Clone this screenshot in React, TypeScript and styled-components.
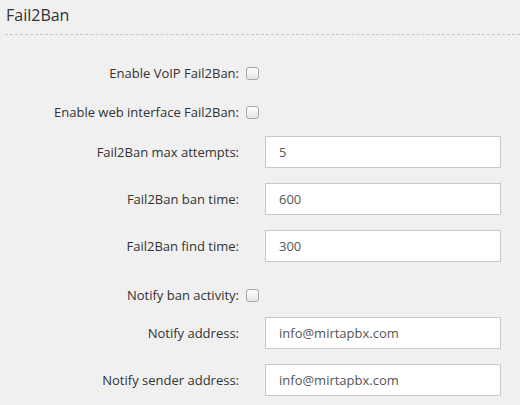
import React from "react";
import styled, { createGlobalStyle } from "styled-components";

const Global = createGlobalStyle`
  html, body { margin: 0; padding: 0; background: #f0f0f0; }
  body { font-family: "Open Sans", "Liberation Sans", sans-serif; color: #333; }
`;

const Page = styled.div`
  width: 520px;
  height: 405px;
  overflow: hidden;
  background: #f0f0f0;
  padding-left: 5px;
  box-sizing: border-box;
`;

const Header = styled.div`
  border-bottom: 1px dashed #c8c8c8;
  height: 35px;
  box-sizing: border-box;
  padding: 3px 0 0 1px;
`;

const Title = styled.h2`
  margin: 0;
  font-size: 16px;
  font-weight: 400;
  line-height: 24px;
  color: #333;
`;

const Row = styled.div<{ $mt: number; $h: number }>`
  display: grid;
  grid-template-columns: 234px auto;
  align-items: center;
  margin-top: ${(p) => p.$mt}px;
  height: ${(p) => p.$h}px;
`;

const Label = styled.label`
  text-align: right;
  font-size: 13px;
  line-height: 18px;
  color: #333;
  white-space: nowrap;
`;

const Check = styled.input.attrs({ type: "checkbox" })`
  appearance: none;
  margin: 0 0 0 7px;
  width: 13px;
  height: 13px;
  border: 1px solid #a6a6a6;
  border-radius: 3px;
  background: linear-gradient(#fdfdfd, #e6e6e6);
  box-sizing: border-box;
`;

const Field = styled.input`
  margin-left: 26px;
  width: 236px;
  height: 32px;
  box-sizing: border-box;
  border: 1px solid #c8c8c8;
  background: #fff;
  padding: 0 0 0 13px;
  font-family: "Open Sans", "Liberation Sans", sans-serif;
  font-size: 13px;
  color: #555;
  outline: none;
`;

type Item =
  | { kind: "check"; label: string; mt: number }
  | { kind: "input"; label: string; value: string; mt: number };

const items: Item[] = [
  { kind: "check", label: "Enable VoIP Fail2Ban:", mt: 28 },
  { kind: "check", label: "Enable web interface Fail2Ban:", mt: 19 },
  { kind: "input", label: "Fail2Ban max attempts:", value: "5", mt: 14 },
  { kind: "input", label: "Fail2Ban ban time:", value: "600", mt: 15 },
  { kind: "input", label: "Fail2Ban find time:", value: "300", mt: 15 },
  { kind: "check", label: "Notify ban activity:", mt: 23 },
  { kind: "input", label: "Notify address:", value: "info@mirtapbx.com", mt: 12 },
  { kind: "input", label: "Notify sender address:", value: "info@mirtapbx.com", mt: 15 },
];

export default function App() {
  return (
    <>
      <Global />
      <Page>
        <Header>
          <Title>Fail2Ban</Title>
        </Header>
        {items.map((it, i) =>
          it.kind === "check" ? (
            <Row key={i} $mt={it.mt} $h={20}>
              <Label>{it.label}</Label>
              <Check readOnly />
            </Row>
          ) : (
            <Row key={i} $mt={it.mt} $h={32}>
              <Label>{it.label}</Label>
              <Field defaultValue={it.value} />
            </Row>
          )
        )}
      </Page>
    </>
  );
}
